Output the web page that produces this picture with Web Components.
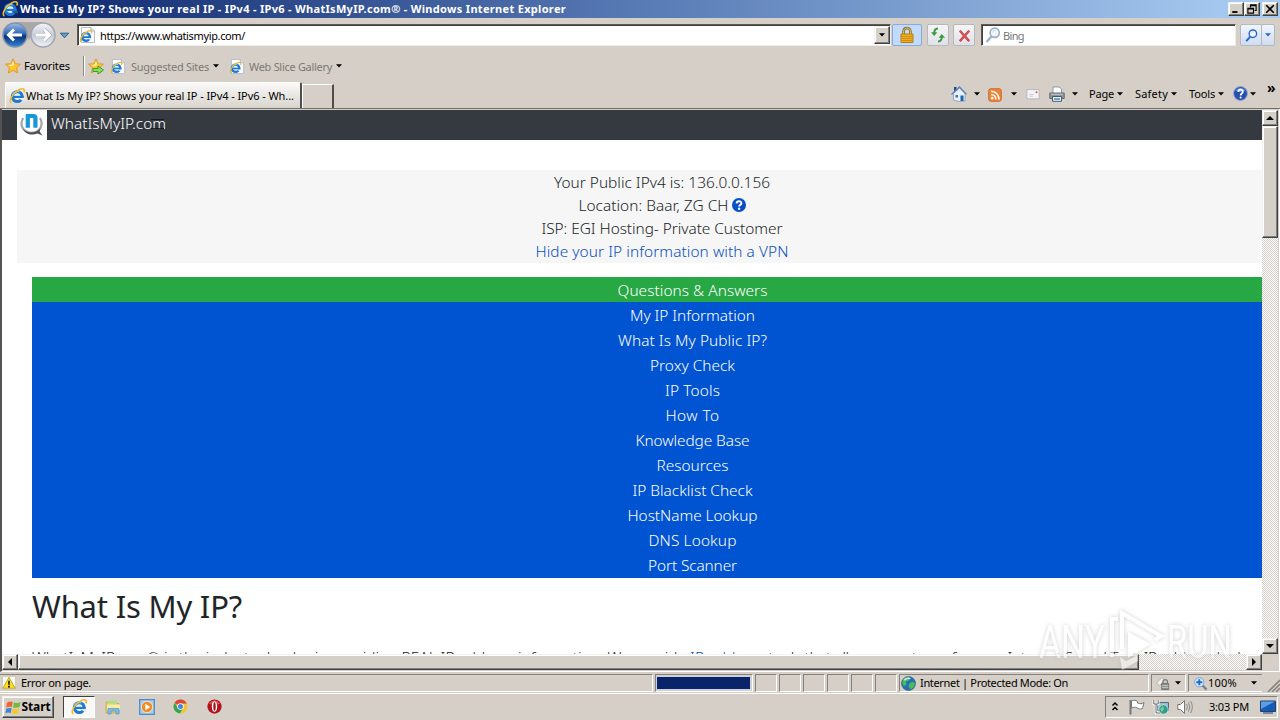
<!DOCTYPE html>
<html lang="en">
<head>
<meta charset="utf-8">
<title>What Is My IP?</title>
<style>
  body {
    margin: 0;
    width: 1280px;
    height: 720px;
    overflow: hidden;
    background: #d5cfc7;
  }
</style>
</head>
<body>
<desktop-screen></desktop-screen>
<script>
const box = /* css */`
  * { box-sizing: border-box; }
  :host { box-sizing: border-box; }
`;

// Gives every element the same shadow root setup
class BaseElement extends HTMLElement {
  constructor() {
    super();
    this.attachShadow({ mode: "open" });
  }

  connectedCallback() {
    this.shadowRoot.innerHTML = `<style>${box}${this.constructor.styles}</style>${this.markup()}`;
  }
}

// Text tracked to an exact width, in pixels
class FitText extends BaseElement {
  static get styles() {
    return /* css */`
      :host {
        display: inline-block;
        flex: none;
        white-space: nowrap;
      }
    `;
  }

  markup() {
    return "<slot></slot>";
  }

  connectedCallback() {
    super.connectedCallback();
    const width = Number(this.getAttribute("w"));
    if (!width) return;
    const natural = this.getBoundingClientRect().width;
    const gap = (width - natural) / this.textContent.length;
    this.style.letterSpacing = `${gap.toFixed(4)}px`;
  }
}

const ie = `
  <circle cx="8.2" cy="8.6" r="4.9" fill="#e8f4fd" stroke="#1f78d2" stroke-width="3"/>
  <path d="M9.5 10H16V12.2L12.5 12.2Z" fill="var(--hole, #e3ecf4)"/>
  <path d="M4 8.9H14.6" stroke="#1f78d2" stroke-width="2.2"/>
  <path d="M3.4 7C4.6 4.2 7.6 3 10.4 3.8" fill="none" stroke="#6cc6f8" stroke-width="1.5"/>
  <path d="M2.4 15C-1 13.4 3.5 5.4 9.6 2C14-.4 16.2 1 15 4.4" fill="none" stroke="#eebb2a" stroke-width="1.6"/>`;

const star = `<path d="M8 .8L10.2 5.7L15.5 6.2L11.5 9.8L12.7 15L8 12.3L3.3 15L4.5 9.8L.5 6.2L5.8 5.7Z" fill="#ffc42e" stroke="#e09a2c"/>
  <path d="M8 3L9.3 6.8L6.2 8.6L3 7L6.6 6.7Z" fill="#fff1a3"/>`;

const icons = {
  ie,
  star,
  page: `<path d="M1.5.5H11L14.5 4V15.5H1.5Z" fill="#fff" stroke="#b4bdc9"/><path d="M11 .5V4H14.5" fill="#dce5f0" stroke="#a9b4c4"/>
    <g transform="translate(-.6 3) scale(.8)">${ie}</g>`,
  addstar: `${star}<path d="M5 10.5H10V8L15.5 12L10 16V13.5H5Z" fill="#8be05b" stroke="#3a9c2c"/>`,
  tri: `<path d="M5 6.2H11L8 9.4Z" fill="currentColor"/>`,
  bigtri: `<path d="M3.5 5.5H12.5L8 10.5Z" fill="#5f9fcf" stroke="#2b5a8c"/>`,
  lock: `<path d="M4.6 8V4.5C4.6-.2 11.4-.2 11.4 4.5V8" fill="none" stroke="#8b6a28" stroke-width="2.6"/>
    <path d="M4.6 8V4.5C4.6-.2 11.4-.2 11.4 4.5V8" fill="none" stroke="#e3c473" stroke-width="1"/>
    <path d="M2 7H14V15.5H2Z" fill="#eeb11d" stroke="#b57c16"/><path d="M2.5 9.5H13.5M2.5 11.5H13.5M2.5 13.5H13.5" stroke="#c48510" stroke-width=".8"/>`,
  refresh: `<path d="M8 1.5C5.5 1.6 4.2 3 4.2 6" fill="none" stroke="#3a9c42" stroke-width="2"/><path d="M1 5.2H7.4L4.2 9Z" fill="#3a9c42"/>
    <path d="M8 14.5C10.5 14.4 11.8 13 11.8 10" fill="none" stroke="#3a9c42" stroke-width="2"/><path d="M8.6 10.8H15L11.8 7Z" fill="#3a9c42"/>`,
  stop: `<path d="M3 3L13 14M13 3L3 14" stroke="#b5383e" stroke-width="2.4"/><path d="M3 3L13 14M13 3L3 14" stroke="#e35258" stroke-width="1.4"/>`,
  lens: `<path d="M1.5 15L6.5 9.5" stroke="currentColor" stroke-width="2.4"/><circle cx="9.7" cy="5.8" r="4.6" fill="#f0f7fd" stroke="currentColor" stroke-width="1.7"/><path d="M7.5 5.5C7.8 4 9 3.4 10.3 3.5" fill="none" stroke="#b8d8f0"/>`,
  home: `<path d="M3 1H5.5V5H3Z" fill="#28479a"/><path d="M2.5 7.5L8.5 2L14 7.5V15L8 15.5L2.5 14Z" fill="#e8f0fa" stroke="#7790b5" stroke-width=".7"/>
    <path d="M.5 8.5L8.5 1L15.5 8.5" fill="none" stroke="#6482b8" stroke-width="1.4"/><path d="M9.5 9.5H12.5V15H9.5Z" fill="#1767a8"/><path d="M4.5 9H7V11.5H4.5Z" fill="#4370a8"/>`,
  rss: `<rect x=".8" y=".8" width="14.4" height="14.4" rx="2.4" fill="#ee8436" stroke="#cd6420"/>
    <circle cx="4.7" cy="11.6" r="1.5" fill="#fff"/><path d="M3.4 7.3C6.5 7.3 9 9.8 9 13M3.4 3.7C8.5 3.7 12.6 7.8 12.6 13" fill="none" stroke="#fff" stroke-width="1.7"/>`,
  mail: `<path d="M1 3H15V13.5H1Z" fill="#f4f4f7" stroke="#b2b2ba"/><path d="M11 5H13V7H11Z" fill="#dc4b4b"/><path d="M4 8.5H9M4 10.5H8" stroke="#c4c7d2"/>`,
  print: `<path d="M4 1H10L12.5 3V8H4Z" fill="#fff" stroke="#7d8794" stroke-width=".8"/><path d="M.8 7H15.2V12.5H.8Z" fill="#8e959c" stroke="#666d74"/>
    <path d="M2 8.3H14" stroke="#c4c9cd"/><path d="M3.5 10.5H12.5V15.3H3.5Z" fill="#e9f4fb" stroke="#4b5966"/><path d="M5 13H11" stroke="#3d8bc0" stroke-width="1.5"/>`,
  help: `<circle cx="8" cy="8" r="7.4" fill="#2450b4" stroke="#9aa6c0"/><path d="M3 5C5 1 11 1 13 5Q8 7 3 5Z" fill="#6f9be4"/>
    <path d="M5.7 6.3C5.7 3 10.5 3.1 10.5 6C10.5 8 8.1 8 8.1 10" fill="none" stroke="#fff" stroke-width="1.8"/><circle cx="8.1" cy="12.3" r="1.1" fill="#fff"/>`,
  question: `<circle cx="8" cy="8" r="8" fill="#0350c8"/><path d="M5.3 6.4C5.3 2.9 10.8 3 10.8 6.1C10.8 8 8.1 7.8 8.1 9.8" fill="none" stroke="#fff" stroke-width="2.2"/><circle cx="8.1" cy="12.2" r="1.4" fill="#fff"/>`,
  warn: `<path d="M.5.5H15.5V15.5H.5Z" fill="#fbfbf8" stroke="#c9c5bc"/><path d="M8 1.5L15 14H1Z" fill="#ffe11d" stroke="#b99a13"/><path d="M8 5.5V10" stroke="#111" stroke-width="1.8"/><path d="M7 11H9V13H7Z"/>`,
  globe: `<circle cx="8" cy="8" r="7.4" fill="#2470b6" stroke="#375d82" stroke-width=".8"/><path d="M3 3C5 1 9 1 10 2L8 5L5 6L6 9L3 11C1 8 1 5 3 3M9 8L12 6L15 8C14 12 12 14 10 14L8 11Z" fill="#48bd57"/><path d="M3.5 4.5Q6 1.5 10 2.8" stroke="#c6ecf8" stroke-width="1.6" fill="none"/>`,
  shield: `<path d="M.5 8L7 1.5L10 5L4 11Z" fill="#eee" stroke="#a9a9a9"/><path d="M8 9V6.5C8 3.5 13 3.5 13 6.5V9" fill="none" stroke="#777" stroke-width="1.4"/><path d="M6.5 8.5H14.5V15.5H6.5Z" fill="#8d8d8d" stroke="#707070"/><path d="M7 11H14M7 13H14" stroke="#ccc"/>`,
  zoom: `<path d="M10 10L15.5 15.5" stroke="#79818e" stroke-width="2.8"/><circle cx="6.5" cy="6.5" r="5.7" fill="#d3e8fb" stroke="#86a5cf" stroke-width="1.2"/><path d="M6.5 2.8V10.2M2.8 6.5H10.2" stroke="#1f6ad0" stroke-width="2.3"/>`,
  win: `<path d="M1 3Q4 .7 7.2 2.2L6.2 7.5Q3.5 6.4.2 8.1Z" fill="#ef6430"/><path d="M8.4 2.7Q12 4 15.5 2L14.4 7.5Q11 9 7.4 7.9Z" fill="#74b943"/>
    <path d="M.2 9.4Q3 7.8 6 8.8L5 14Q2 12.6-.6 14.3Z" fill="#3b86d7"/><path d="M7.2 9.3Q10.7 10.4 14.1 8.8L13 14.2Q10 15.8 6.3 14.5Z" fill="#f8c72c"/>`,
  folder: `<path d="M1 3H6L7.5 4.5H14V14H1Z" fill="#e8c85f" stroke="#c2a348" stroke-width=".7"/><path d="M3 1.5H12V7H3Z" fill="#b7dc88"/><path d="M2 5.5H15V11H2Z" fill="#fbeaa5"/>
    <path d="M3 15V9.5H14V15H11V12H6V15Z" fill="#7bbce6" stroke="#5397c5" stroke-width=".7"/>`,
  media: `<path d="M.7.7H15.3V15.3H.7Z" fill="#a9cdee" stroke="#4d8dcb" stroke-width="1.3"/><circle cx="8" cy="8" r="5.6" fill="#f28b1c" stroke="#fff" stroke-width=".6"/><path d="M6.3 4.8L11.4 8L6.3 11.2Z" fill="#fff"/>`,
  chrome: `<circle cx="8" cy="8" r="7.4" fill="#f4c532"/><path d="M8 8L1.6 4.2A7.4 7.4 0 0 1 14.6 4.8L8 5Z" fill="#de4437"/><path d="M1.6 4.2A7.4 7.4 0 0 0 7.5 15.4L10.6 9.5L8 8L5.4 9.7Z" fill="#2fa655"/>
    <circle cx="8" cy="8" r="3.5" fill="#fff"/><circle cx="8" cy="8" r="2.7" fill="#4384e8"/>`,
  opera: `<circle cx="8" cy="8" r="7.6" fill="#b3121a"/><path d="M2 5Q8-2.5 14 5Q8 7 2 5Z" fill="#dc5055"/><ellipse cx="8" cy="8" rx="2.9" ry="5.6" fill="#fff"/><ellipse cx="8" cy="8" rx="1.3" ry="4.6" fill="#a8141b"/>`,
  chevrons: `<path d="M5.5 6.5L8 4L10.5 6.5M5.5 11L8 8.5L10.5 11" fill="none" stroke="#000" stroke-width="1.5"/>`,
  flag: `<path d="M1.5 1V15.5" stroke="#777" stroke-width="2"/><path d="M2.5 2C5 1 6.5 1 8.5 2.5V4C11 5 13 5 15 3.5L13.5 9.5C11 10.5 9.5 10 8 8.8C6 8 4.5 8 2.5 9Z" fill="#fff" stroke="#777"/>`,
  net: `<path d="M4.5 3.5H15.5V11.5H4.5Z" fill="#8ebfdb" stroke="#5a6978"/><path d="M.8 1V5H5.2V1M3 5V14H7" fill="none" stroke="#fff" stroke-width="2.6"/><path d="M.8 1V5H5.2V1M3 5V14H7" fill="none" stroke="#666"/><circle cx="10.5" cy="10.5" r="4.7" fill="#319d91" stroke="#eee" stroke-width=".7"/><path d="M7 10L10 7L11 10L9 13Z" fill="#78d080"/>`,
  sound: `<path d="M.8 5.5H3.5L7.5 1.5V14.5L3.5 10.5H.8Z" fill="#fff" stroke="#777"/><path d="M9.5 5Q11.3 8 9.5 11M11.5 3.5Q14 8 11.5 12.5M13.6 2Q17 8 13.6 14" fill="none" stroke="#8a8a8a"/>`,
  monitor: `<path d="M.5 2H15.5V12.5H.5Z" fill="#155cb9" stroke="#27415f"/><path d="M1 2.5H15L1 10Z" fill="#5b9ee5"/><path d="M3 14H13" stroke="#60758b" stroke-width="1.6"/>`,
  left: `<path d="M10 4V12L6 8Z" fill="#000"/>`,
  right: `<path d="M6 4V12L10 8Z" fill="#000"/>`,
  up: `<path d="M4 10H12L8 6Z" fill="#000"/>`,
  down: `<path d="M4 6H12L8 10Z" fill="#000"/>`,
  min: `<path d="M3 12H10" stroke="#000" stroke-width="2.4"/>`,
  restore: `<path d="M6 6V2.5H13.5V10H11.5M6 3.5H13.5" fill="none" stroke="#000" stroke-width="1.5"/><path d="M2.5 7H10V13.5H2.5ZM2.5 8H10" fill="none" stroke="#000" stroke-width="1.5"/>`,
  close: `<path d="M3 3L13 13M13 3L3 13" stroke="#000" stroke-width="2.3"/>`
};

class UiIcon extends BaseElement {
  static get styles() {
    return /* css */`
      :host {
        display: inline-block;
        flex: none;
        width: 16px;
        height: 16px;
      }

      svg {
        display: block;
        width: 100%;
        height: 100%;
        overflow: visible;
      }
    `;
  }

  markup() {
    return `<svg viewBox="0 0 16 16">${icons[this.getAttribute("name")]}</svg>`;
  }
}

// Raised grey button
class WinButton extends BaseElement {
  static get styles() {
    return /* css */`
      :host {
        display: flex;
        flex: none;
        align-items: center;
        justify-content: center;
        background: #d4d0c8;
        border: 1px solid;
        border-color: #f4f2ee #404040 #404040 #f4f2ee;
        box-shadow: inset -1px -1px #808080, inset 1px 1px #fff;
      }
    `;
  }

  markup() {
    return "<slot></slot>";
  }
}

class TitleBar extends BaseElement {
  static get styles() {
    return /* css */`
      :host {
        display: flex;
        height: 18px;
        padding: 0 2px;
        align-items: center;
        background: linear-gradient(to right, #0a246a, #587ab5 50%, #a6caf0 97%);
        color: #fff;
        font-weight: bold;
        --hole: #2d5390;
      }

      fit-text { margin: 0 auto 0 2px; }
      win-button { width: 16px; height: 14px; }
      win-button ui-icon { width: 12px; height: 12px; }
      .close { margin-left: 2px; }
    `;
  }

  markup() {
    return /* html */`
      <ui-icon name="ie"></ui-icon>
      <fit-text w="546">What Is My IP? Shows your real IP - IPv4 - IPv6 - WhatIsMyIP.com® - Windows Internet Explorer</fit-text>
      <win-button><ui-icon name="min"></ui-icon></win-button>
      <win-button><ui-icon name="restore"></ui-icon></win-button>
      <win-button class="close"><ui-icon name="close"></ui-icon></win-button>`;
  }
}

class AddressBar extends BaseElement {
  static get styles() {
    return /* css */`
      :host {
        display: flex;
        height: 34px;
        padding: 0 7px 0 2px;
        align-items: center;
      }

      .travel { width: 55px; height: 28px; flex: none; }

      .field {
        display: flex;
        height: 22px;
        flex: none;
        align-items: center;
        background: #fff;
        border: 1px solid;
        border-color: #5e5b57 #efede9 #efede9 #5e5b57;
        box-shadow: inset 1px 1px #404040;
      }

      .address { width: 814px; margin-left: 3px; padding-left: 2px; }
      .address fit-text { margin: 1px auto 0 4px; }
      .address win-button { width: 16px; height: 18px; }
      .search { width: 255px; margin-left: 6px; padding-left: 3px; color: #777; }
      .search ui-icon { color: #9db0c4; margin-right: 2px; }
      .search fit-text { margin-top: 1px; }

      .tool {
        display: flex;
        width: 22px;
        height: 22px;
        flex: none;
        align-items: center;
        justify-content: center;
        border: 1px solid #b3b8c2;
        border-radius: 2px;
        background: linear-gradient(#f5f5f5, #dfe2e8);
      }

      .lock { width: 30px; margin: 0 4px 0 1px; background: #c2dafb; border-color: #86abe0; }
      .blue { color: #2864cd; background: linear-gradient(#f0f5fc, #cfdcf0); }
    `;
  }

  markup() {
    return /* html */`
      <svg class="travel" viewBox="0 0 55 28">
        <defs>
          <linearGradient id="b" x2="0" y2="1"><stop stop-color="#9dbde9"/><stop offset=".45" stop-color="#3168b5"/><stop offset=".55" stop-color="#0b2f78"/><stop offset="1" stop-color="#2f8be0"/></linearGradient>
          <linearGradient id="f" x2="0" y2="1"><stop stop-color="#f5f7fa"/><stop offset=".5" stop-color="#c5cbd5"/><stop offset="1" stop-color="#eff3f8"/></linearGradient>
        </defs>
        <path d="M13 1H41V9Q27 14 27 20Q27 14 13 9Z" fill="#aaa8ab"/>
        <circle cx="13" cy="14" r="12" fill="url(#b)" stroke="#8492aa" stroke-width="1.5"/>
        <circle cx="41" cy="14" r="12" fill="url(#f)" stroke="#a1a5ae" stroke-width="1.5"/>
        <path d="M20 14H7M12 8.5L6.5 14L12 19.5" fill="none" stroke="#fff" stroke-width="3"/>
        <path d="M34 14H47M42 8.5L47.5 14L42 19.5" fill="none" stroke="#a9aeb9" stroke-width="4"/>
        <path d="M34 14H47M42 8.5L47.5 14L42 19.5" fill="none" stroke="#fff" stroke-width="2.8"/>
      </svg>
      <ui-icon name="bigtri" style="width:15px;height:15px"></ui-icon>
      <div class="field address" style="margin-left:5px">
        <ui-icon name="page"></ui-icon>
        <fit-text w="145">https://www.whatismyip.com/</fit-text>
        <win-button><ui-icon name="tri"></ui-icon></win-button>
      </div>
      <div class="tool lock"><ui-icon name="lock"></ui-icon></div>
      <div class="tool" style="margin-left:1px"><ui-icon name="refresh"></ui-icon></div>
      <div class="tool" style="margin-left:4px"><ui-icon name="stop" style="width:15px;height:15px"></ui-icon></div>
      <div class="field search"><ui-icon name="lens"></ui-icon><fit-text w="21">Bing</fit-text></div>
      <div class="tool blue" style="margin-left:4px"><ui-icon name="lens" style="width:13px;height:13px"></ui-icon></div>
      <div class="tool blue" style="width:14px;margin-left:-1px"><ui-icon name="tri"></ui-icon></div>`;
  }
}

class FavoritesBar extends BaseElement {
  static get styles() {
    return /* css */`
      :host {
        display: flex;
        height: 30px;
        padding: 0 0 2px 5px;
        align-items: center;
      }

      .line {
        width: 2px;
        height: 20px;
        margin: 0 4px 0 13px;
        border-left: 1px solid #8b8781;
        background: #fff;
      }

      .dim { color: #7d7974; margin-top: 2px; }
      .page { width: 15px; height: 15px; margin-top: 1px; }
    `;
  }

  markup() {
    return /* html */`
      <ui-icon name="star"></ui-icon>
      <fit-text w="46" style="margin-left:3px">Favorites</fit-text>
      <div class="line"></div>
      <ui-icon name="addstar" style="margin-left:-1px"></ui-icon>
      <ui-icon name="page" class="page" style="margin-left:7px"></ui-icon>
      <fit-text w="78" class="dim" style="margin-left:5px">Suggested Sites</fit-text>
      <ui-icon name="tri" style="margin-left:-1px"></ui-icon>
      <ui-icon name="page" class="page" style="margin-left:6px"></ui-icon>
      <fit-text w="83" class="dim" style="margin-left:4px">Web Slice Gallery</fit-text>
      <ui-icon name="tri" style="margin-left:-1px"></ui-icon>`;
  }
}

class CommandBar extends BaseElement {
  static get styles() {
    return /* css */`
      :host {
        display: flex;
        height: 27px;
        padding-left: 5px;
        align-items: flex-end;
        border-bottom: 1px solid #716f6a;
      }

      .tab {
        display: flex;
        width: 297px;
        height: 26px;
        padding: 0 0 0 3px;
        align-items: center;
        background: linear-gradient(#fbfaf9, #d8d4cd);
        border: 1px solid #fff;
        border-right: 2px solid #504e4b;
        border-bottom: 0;
        border-radius: 2px 2px 0 0;
      }

      .new {
        width: 32px;
        height: 24px;
        border: 1px solid #fff;
        border-right: 2px solid #504e4b;
        border-bottom: 0;
      }

      .tools {
        display: flex;
        height: 26px;
        margin-left: 616px;
        padding-bottom: 3px;
        align-items: center;
      }

      .small { width: 14px; height: 14px; }
      .more { align-self: flex-start; font-size: 14px; font-weight: bold; line-height: 11px; margin-left: 6px; }
    `;
  }

  markup() {
    return /* html */`
      <div class="tab">
        <ui-icon name="ie"></ui-icon>
        <fit-text w="268" style="margin-left:1px">What Is My IP? Shows your real IP - IPv4 - IPv6 - Wh...</fit-text>
      </div>
      <div class="new"></div>
      <div class="tools">
        <ui-icon name="home" style="margin-left:1px"></ui-icon>
        <ui-icon name="tri" style="margin-left:2px"></ui-icon>
        <ui-icon name="rss" class="small" style="margin-left:3px;margin-top:2px"></ui-icon>
        <ui-icon name="tri" style="margin-left:4px"></ui-icon>
        <ui-icon name="mail" class="small" style="margin-left:4px"></ui-icon>
        <ui-icon name="print" style="margin-left:9px"></ui-icon>
        <ui-icon name="tri" style="margin-left:2px"></ui-icon>
        <fit-text w="25" style="margin-left:6px">Page</fit-text>
        <ui-icon name="tri" style="margin-left:-2px"></ui-icon>
        <fit-text w="33" style="margin-left:7px">Safety</fit-text>
        <ui-icon name="tri" style="margin-left:-2px"></ui-icon>
        <fit-text w="26" style="margin-left:7px">Tools</fit-text>
        <ui-icon name="tri" style="margin-left:-2px"></ui-icon>
        <ui-icon name="help" style="width:15px;height:15px;margin-left:4px"></ui-icon>
        <ui-icon name="tri" style="margin-left:-3px"></ui-icon>
        <span class="more">»</span>
      </div>`;
  }
}

class ScrollBar extends BaseElement {
  static get styles() {
    return /* css */`
      :host {
        display: flex;
        width: 16px;
        height: 544px;
        flex-direction: column;
        background: repeating-conic-gradient(#fff 0 25%, #d4d0c8 0 50%) 0 0 / 2px 2px;
      }

      :host([horizontal]) {
        width: 1260px;
        height: 16px;
        flex-direction: row;
      }

      .end { width: 16px; height: 16px; }
      .thumb { height: 112px; }
      :host([horizontal]) .thumb { width: 1121px; height: 16px; }
      .end:last-child { margin-top: auto; }
      :host([horizontal]) .end:last-child { margin: 0 0 0 auto; }
    `;
  }

  markup() {
    const [start, end] = this.hasAttribute("horizontal") ? ["left", "right"] : ["up", "down"];
    return /* html */`
      <win-button class="end"><ui-icon name="${start}"></ui-icon></win-button>
      <win-button class="thumb"></win-button>
      <win-button class="end"><ui-icon name="${end}"></ui-icon></win-button>`;
  }
}

class IpPage extends BaseElement {
  static get styles() {
    return /* css */`
      :host {
        display: block;
        width: 1260px;
        height: 544px;
        overflow: hidden;
        background: #fff;
        color: #212529;
        font: 15.4px/23px "Noto Sans", sans-serif;
        font-weight: 300;
      }

      header {
        display: flex;
        height: 30px;
        padding-left: 15px;
        background: #343a40;
        color: #fff;
      }

      header fit-text { margin-left: 4px; line-height: 28px; }
      .logo { width: 30px; height: 30px; background: #fff; }
      .toggle { width: 13px; height: 10px; margin: 9px 0 0 -15px; border: solid #111; border-width: 1px 0; opacity: .8; }

      .info {
        width: 1290px;
        height: 93px;
        margin: 30px 0 0 15px;
        padding-top: 1px;
        background: #f6f6f6;
        text-align: center;
      }

      .info div { height: 23px; }
      .info ui-icon { width: 14px; height: 14px; vertical-align: -1px; margin-left: 3px; }
      a { color: #0a4fc0; }

      nav {
        width: 1321px;
        height: 301px;
        margin: 14px 0 0 30px;
        background: #0053d1;
        color: #fff;
        text-align: center;
        line-height: 28px;
      }

      nav div { height: 25px; }
      nav div:first-child { background: #28a745; }

      h1 {
        margin: 8px 0 0 30px;
        font-size: 31px;
        font-weight: 400;
        line-height: 40px;
      }

      p { margin: 20px 0 0 30px; white-space: nowrap; }
    `;
  }

  markup() {
    const links = [
      ["Questions &amp; Answers", 150], ["My IP Information", 125], ["What Is My Public IP?", 149],
      ["Proxy Check", 85], ["IP Tools", 55], ["How To", 54], ["Knowledge Base", 114],
      ["Resources", 72], ["IP Blacklist Check", 120], ["HostName Lookup", 130],
      ["DNS Lookup", 88], ["Port Scanner", 89]
    ];
    return /* html */`
      <header>
        <svg class="logo" viewBox="0 0 30 30">
          <path d="M6.2 8C2.5 14 5 22.5 14.5 22.8C24 22.5 26.5 14 23 8" fill="none" stroke="#a3a5a9" stroke-width="2.2"/>
          <path d="M6 18.5C10 24 19 24 23.5 18L22.6 21.5L25.5 25.5L20.5 23.6C14 26 8 24 6 18.5Z" fill="#4c4f54"/>
          <path d="M8.7 17.8V4H16.5Q20.5 4 20.5 8V17.8H16.3V8H12.9V17.8Z" fill="#1597da"/>
        </svg>
        <fit-text w="115">WhatIsMyIP.com</fit-text>
        <div class="toggle"></div>
      </header>
      <div class="info">
        <div><fit-text w="216">Your Public IPv4 is: 136.0.0.156</fit-text></div>
        <div><fit-text w="150">Location: Baar, ZG CH</fit-text><ui-icon name="question"></ui-icon></div>
        <div><fit-text w="241">ISP: EGI Hosting- Private Customer</fit-text></div>
        <div><a><fit-text w="253">Hide your IP information with a VPN</fit-text></a></div>
      </div>
      <nav>${links.map(([label, w]) => `<div><fit-text w="${w}">${label}</fit-text></div>`).join("")}</nav>
      <h1><fit-text w="210">What Is My IP?</fit-text></h1>
      <p><fit-text w="658">WhatIsMyIP.com® is the industry leader in providing REAL IP address information. We provide&nbsp;</fit-text><a><fit-text w="75">IP address</fit-text></a><fit-text w="497">&nbsp;tools that allow users to perform an Internet Speed Test, IP address lookup</fit-text></p>`;
  }
}

class AnyRunMark extends BaseElement {
  static get styles() {
    return /* css */`
      :host {
        display: block;
        position: absolute;
        left: 1034px;
        top: 605px;
        width: 204px;
        height: 70px;
        filter: drop-shadow(0 0 2px #aaa);
        opacity: .55;
      }
    `;
  }

  markup() {
    return /* html */`
      <svg width="204" height="70" fill="none" stroke="#fff">
        <g fill="#fff" stroke="none" font-family="Roboto, sans-serif" font-size="46">
          <text x="5" y="53" textLength="66" lengthAdjust="spacingAndGlyphs">ANY</text>
          <text x="133" y="53" textLength="65" lengthAdjust="spacingAndGlyphs">RUN</text>
        </g>
        <path d="M78 52V14H84M88 44V8L127 31L121 35" stroke-width="4"/>
        <path d="M94 27V53L117 39ZM86 52L92 56L104 50V56L88 65Z" fill="#fff" stroke="none"/>
      </svg>`;
  }
}

class StatusBar extends BaseElement {
  static get styles() {
    return /* css */`
      :host {
        display: flex;
        height: 21px;
        padding: 1px 0 1px;
        gap: 2px;
        border-bottom: 1px solid #fff;
      }

      .cell {
        display: flex;
        height: 18px;
        flex: none;
        align-items: center;
        border: 1px solid;
        border-color: #85817b #fff #fff #85817b;
      }

      .bar { width: 93px; height: 12px; margin-left: 1px; background: #0a246a; box-shadow: 0 0 0 1px #cbd1e0; }
      .grip { width: 16px; height: 18px; }
    `;
  }

  markup() {
    return /* html */`
      <div class="cell" style="width:653px;padding-left:2px;border-left:0">
        <ui-icon name="warn" style="width:14px;height:14px"></ui-icon>
        <fit-text w="70" style="margin-left:5px">Error on page.</fit-text>
      </div>
      <div class="cell" style="width:98px"><div class="bar"></div></div>
      ${`<div class="cell" style="width:22px"></div>`.repeat(6)}
      <div class="cell" style="width:250px;padding-left:1px">
        <ui-icon name="globe" style="width:15px;height:15px"></ui-icon>
        <fit-text w="148" style="margin-left:4px">Internet | Protected Mode: On</fit-text>
      </div>
      <div class="cell" style="width:35px;padding-left:4px">
        <ui-icon name="shield" style="width:14px;height:14px"></ui-icon>
        <ui-icon name="tri"></ui-icon>
      </div>
      <div class="cell" style="width:74px;padding-left:5px;border-right:0">
        <ui-icon name="zoom" style="width:13px;height:13px"></ui-icon>
        <fit-text w="29" style="margin-left:1px">100%</fit-text>
        <ui-icon name="tri" style="margin-left:9px"></ui-icon>
      </div>
      <svg class="grip"><path d="M4 18L16 6M8 18L16 10M12 18L16 14" stroke="#8a867f" stroke-width="1.6"/></svg>`;
  }
}

class TaskBar extends BaseElement {
  static get styles() {
    return /* css */`
      :host {
        display: flex;
        height: 26px;
        padding: 2px 2px 0;
        align-items: flex-start;
      }

      .start { width: 52px; height: 22px; font-weight: bold; font-size: 12px; }

      .active {
        display: flex;
        width: 32px;
        height: 22px;
        margin-left: 9px;
        align-items: center;
        justify-content: center;
        background: #f9f8f6;
        border: 1px solid;
        border-color: #404040 #fff #fff #404040;
      }

      .quick { margin: 3px 0 0 18px; }

      .tray {
        display: flex;
        width: 173px;
        height: 22px;
        margin-left: auto;
        align-items: center;
        border: 1px solid;
        border-color: #808080 #fff #fff #808080;
      }
    `;
  }

  markup() {
    return /* html */`
      <win-button class="start">
        <ui-icon name="win" style="width:15px;height:15px"></ui-icon>
        <fit-text w="29" style="margin-left:1px">Start</fit-text>
      </win-button>
      <div class="active"><ui-icon name="ie"></ui-icon></div>
      <ui-icon name="folder" class="quick" style="margin-left:10px"></ui-icon>
      <ui-icon name="media" class="quick"></ui-icon>
      <ui-icon name="chrome" class="quick" style="width:15px;height:15px"></ui-icon>
      <ui-icon name="opera" class="quick" style="width:15px;height:15px;margin-left:19px"></ui-icon>
      <div class="tray">
        <ui-icon name="chevrons" style="margin-left:1px"></ui-icon>
        <ui-icon name="flag" style="margin-left:6px"></ui-icon>
        <ui-icon name="net" style="margin-left:8px"></ui-icon>
        <ui-icon name="sound" style="margin-left:8px"></ui-icon>
        <fit-text w="40" style="margin-left:16px">3:03 PM</fit-text>
        <ui-icon name="monitor" style="margin-left:11px"></ui-icon>
      </div>`;
  }
}

class DesktopScreen extends BaseElement {
  static get styles() {
    return /* css */`
      :host {
        display: block;
        height: 720px;
        color: #000;
        font: 11px/14px "Noto Sans", sans-serif;
      }

      .view {
        display: grid;
        width: 1280px;
        height: 563px;
        padding: 1px 2px 2px 0;
        grid-template: 544px 16px / 1260px 16px;
        border-left: 2px solid #55534f;
        border-right: 1px solid #fff;
        border-bottom: 1px solid #fff;
      }
    `;
  }

  markup() {
    return /* html */`
      <title-bar></title-bar>
      <address-bar></address-bar>
      <favorites-bar></favorites-bar>
      <command-bar></command-bar>
      <div class="view">
        <ip-page></ip-page>
        <scroll-bar></scroll-bar>
        <scroll-bar horizontal></scroll-bar>
      </div>
      <div style="height:1px"></div>
      <status-bar></status-bar>
      <task-bar></task-bar>
      <any-run-mark></any-run-mark>`;
  }
}

customElements.define("fit-text", FitText);
customElements.define("ui-icon", UiIcon);
customElements.define("win-button", WinButton);
customElements.define("title-bar", TitleBar);
customElements.define("address-bar", AddressBar);
customElements.define("favorites-bar", FavoritesBar);
customElements.define("command-bar", CommandBar);
customElements.define("scroll-bar", ScrollBar);
customElements.define("ip-page", IpPage);
customElements.define("any-run-mark", AnyRunMark);
customElements.define("status-bar", StatusBar);
customElements.define("task-bar", TaskBar);
customElements.define("desktop-screen", DesktopScreen);
</script>
</body>
</html>
